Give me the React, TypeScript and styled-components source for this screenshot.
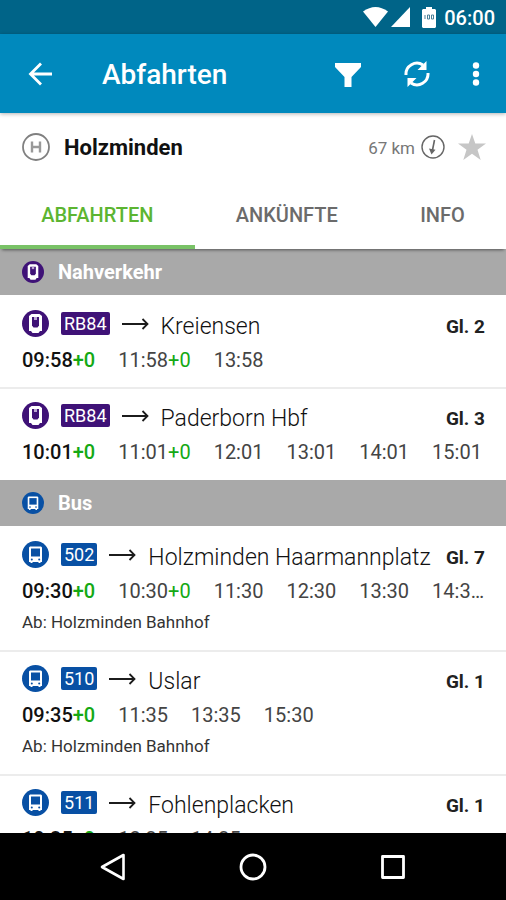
import React from 'react';
import styled, { createGlobalStyle } from 'styled-components';

const GlobalStyle = createGlobalStyle`
  * { box-sizing: border-box; }
  body {
    margin: 0;
    background: #fff;
    color: #212121;
    font-family: Roboto, 'Liberation Sans', sans-serif;
  }
  button {
    display: flex;
    align-items: center;
    justify-content: center;
    padding: 0;
    border: 0;
    background: none;
    color: inherit;
    font: inherit;
    cursor: pointer;
  }
  svg { display: block; flex: none; }
  h1, h2, p, ul { margin: 0; padding: 0; }
`;

const Screen = styled.div`
  display: flex;
  flex-direction: column;
  height: 100vh;
`;

const StatusBar = styled.div`
  display: flex;
  flex: none;
  align-items: center;
  justify-content: flex-end;
  height: 34px;
  padding: 0 11px;
  background: #006488;
  color: #fff;
`;

const Clock = styled.time`
  margin-left: 8px;
  font-size: 20px;
  font-weight: 500;
  line-height: 34px;
  padding-top: 2px;
`;

const BatterySlot = styled.span`
  margin-left: 11px;
`;

const AppBar = styled.header`
  position: relative;
  z-index: 1;
  display: flex;
  flex: none;
  align-items: center;
  height: 79px;
  padding: 0 10px 0 20px;
  background: #0089bd;
  color: #fff;
  box-shadow: 0 1px 4px rgba(0, 0, 0, 0.3);
`;

const Title = styled.h1`
  flex: 1;
  margin-left: 42px;
  padding-top: 2px;
  font-size: 28px;
  font-weight: 500;
  line-height: 36px;
`;

const BarButton = styled.button<{ $gap?: number }>`
  width: 40px;
  height: 48px;
  margin-left: ${(p) => p.$gap ?? 0}px;
`;

const StationRow = styled.section`
  display: flex;
  flex: none;
  align-items: center;
  height: 68px;
  padding: 0 20px 0 22px;
`;

const StationName = styled.h2`
  flex: 1;
  margin-left: 14px;
  padding-top: 2px;
  color: #111;
  font-size: 22px;
  font-weight: 700;
  line-height: 32px;
`;

const Distance = styled.span`
  margin-right: 6px;
  padding-top: 2px;
  color: #777;
  font-size: 17px;
  line-height: 32px;
`;

const StarButton = styled.button`
  margin-left: 13px;
`;

const Tabs = styled.div`
  position: relative;
  z-index: 1;
  display: flex;
  flex: none;
  height: 68px;
  box-shadow: 0 3px 3px -2px rgba(0, 0, 0, 0.5);
`;

const Tab = styled.button<{ $active?: boolean }>`
  && {
    flex: 1 1 auto;
    padding: 4px 41px 0;
    border-bottom: 4px solid ${(p) => (p.$active ? '#79c267' : 'transparent')};
    color: ${(p) => (p.$active ? '#5cb531' : '#6b6b6b')};
    font-size: 20px;
    font-weight: 500;
  }
`;

const List = styled.main`
  flex: 1;
  min-height: 0;
  overflow-y: auto;
  scrollbar-width: none;
`;

const SectionHead = styled.h2`
  display: flex;
  align-items: center;
  gap: 14px;
  height: 46px;
  padding: 0 22px;
  background: #a9a9a9;
  color: #fff;
  font-size: 20px;
  font-weight: 700;
`;

const Departures = styled.ul`
  && { padding-bottom: 1px; }
  list-style: none;
`;

const Departure = styled.li`
  padding: 11px 21px 12px 22px;
  border-top: 2px solid #ececec;
  &:first-child { border-top-color: #fff; }
`;

const Heading = styled.div`
  display: flex;
  align-items: center;
  height: 36px;
  margin-bottom: 1px;
`;

const Line = styled.div`
  display: flex;
  align-items: center;
  gap: 12px;
  padding-bottom: 5px;
`;

const Badge = styled.span<{ $color: string }>`
  padding: 0 3px;
  border-radius: 2px;
  background: ${(p) => p.$color};
  color: #fff;
  font-size: 18px;
  line-height: 23px;
`;

const Destination = styled.span`
  flex: 1;
  margin-left: 12px;
  padding-top: 2px;
  overflow: hidden;
  color: #111;
  font-size: 23px;
  font-weight: 300;
  line-height: 32px;
  white-space: nowrap;
`;

const Platform = styled.span`
  padding-top: 2px;
  font-size: 19px;
  font-weight: 700;
  line-height: 32px;
`;

const Times = styled.div`
  display: flex;
  gap: 23px;
  height: 30px;
  color: #333;
  font-size: 20px;
  line-height: 30px;
  white-space: nowrap;
`;

const Time = styled.span<{ $next?: boolean }>`
  color: ${(p) => (p.$next ? '#111' : '#444')};
  font-weight: ${(p) => (p.$next ? 500 : 400)};
`;

const Delay = styled.span`
  color: #14a914;
`;

const Origin = styled.p`
  color: #333;
  font-size: 17px;
  line-height: 32px;
`;

const NavBar = styled.nav`
  display: flex;
  flex: none;
  justify-content: center;
  height: 67px;
  background: #000;
  color: #fff;
`;

const NavButton = styled.button`
  width: 140px;
`;

const PURPLE = '#3f1277';
const BLUE = '#0850a4';

type Kind = 'train' | 'bus';

function VehicleIcon({ kind, size }: { kind: Kind; size: number }) {
  if (kind === 'train') {
    return (
      <svg width={size} height={size} viewBox="0 0 27 27" aria-hidden="true">
        <circle cx="13.5" cy="13.5" r="13.5" fill={PURPLE} />
        <path d="M9.500 4h8L20 6v15h-2l-1.500 2h-6L9 21H7V6z" fill="#fff" />
        <path d="M10 7h7v8.500L15.500 17.500h-4L10 15.500z" fill={PURPLE} />
        <path d="M12 7h3v3h-3z" fill="#b9a6d0" />
      </svg>
    );
  }
  return (
    <svg width={size} height={size} viewBox="0 0 27 27" aria-hidden="true">
      <circle cx="13.500" cy="13.500" r="13.500" fill={BLUE} />
      <path d="M8 5.500h11l1 1V21h-1.500v1h-2v-1h-6v1h-2v-1H7V6.500z" fill="#fff" />
      <path d="M9 7.500h9v8H9z" fill={BLUE} />
      <circle cx="9.800" cy="18.500" r="1" fill={BLUE} />
      <circle cx="17.200" cy="18.500" r="1" fill={BLUE} />
    </svg>
  );
}

function LongArrow() {
  return (
    <svg width="27" height="14" viewBox="0 0 27 14" fill="none" stroke="#1c1c1c" strokeWidth="1.800" aria-label="nach">
      <path d="M0 7h26M20.500 2l5 5-5 5" />
    </svg>
  );
}

interface Entry {
  line: string;
  to: string;
  platform: string;
  times: [string, boolean?][];
  from?: string;
}

const groups: { name: string; kind: Kind; entries: Entry[] }[] = [
  {
    name: 'Nahverkehr',
    kind: 'train',
    entries: [
      { line: 'RB84', to: 'Kreiensen', platform: 'Gl. 2', times: [['09:58', true], ['11:58', true], ['13:58']] },
      {
        line: 'RB84',
        to: 'Paderborn Hbf',
        platform: 'Gl. 3',
        times: [['10:01', true], ['11:01', true], ['12:01'], ['13:01'], ['14:01'], ['15:01']],
      },
    ],
  },
  {
    name: 'Bus',
    kind: 'bus',
    entries: [
      {
        line: '502',
        to: 'Holzminden Haarmannplatz',
        platform: 'Gl. 7',
        times: [['09:30', true], ['10:30', true], ['11:30'], ['12:30'], ['13:30'], ['14:3…']],
        from: 'Ab: Holzminden Bahnhof',
      },
      {
        line: '510',
        to: 'Uslar',
        platform: 'Gl. 1',
        times: [['09:35', true], ['11:35'], ['13:35'], ['15:30']],
        from: 'Ab: Holzminden Bahnhof',
      },
      {
        line: '511',
        to: 'Fohlenplacken',
        platform: 'Gl. 1',
        times: [['10:35', true], ['12:35'], ['14:35']],
        from: 'Ab: Holzminden Bahnhof',
      },
    ],
  },
];

export default function App() {
  return (
    <Screen>
      <GlobalStyle />
      <StatusBar>
        <svg width="48" height="20" viewBox="0 0 48 20" fill="#fff" aria-hidden="true">
          <path d="M0 4.500Q12.500-4.500 25 4.500L12.500 20z" />
          <path d="M47 0v20H28z" />
        </svg>
        <BatterySlot>
          <svg width="14" height="21" viewBox="0 0 14 21" aria-hidden="true">
            <path d="M4 0h6v2h3l1 1v17l-1 1H1l-1-1V3l1-1h3z" fill="#fff" />
            <path d="M3 8v4M5.500 8h2v4h-2zM9.500 8h2v4h-2z" fill="none" stroke="#4a8098" />
          </svg>
        </BatterySlot>
        <Clock>06:00</Clock>
      </StatusBar>

      <AppBar>
        <BarButton aria-label="Zurück">
          <svg width="24" height="24" viewBox="0 0 24 24" fill="none" stroke="#fff" strokeWidth="2.800" aria-hidden="true">
            <path d="M24 12H3M13 1.500L2.500 12 13 22.500" />
          </svg>
        </BarButton>
        <Title>Abfahrten</Title>
        <BarButton aria-label="Filter">
          <svg width="26" height="26" viewBox="0 0 26 26" fill="#fff" aria-hidden="true">
            <path d="M0 2h26v4l-9.500 10v10h-7V16L0 6z" />
          </svg>
        </BarButton>
        <BarButton $gap={29} aria-label="Aktualisieren">
          <svg width="26" height="28" viewBox="0 0 26 28" fill="none" stroke="#fff" strokeWidth="3" aria-hidden="true">
            <path d="M2 15A11 11 0 0 1 19 5" />
            <path d="M24 13A11 11 0 0 1 7 23" />
            <path d="M22.500 1v9h-9zM3.500 27v-9h9z" fill="#fff" stroke="none" />
          </svg>
        </BarButton>
        <BarButton $gap={19} aria-label="Mehr">
          <svg width="8" height="24" viewBox="0 0 8 24" fill="#fff" aria-hidden="true">
            <circle cx="4" cy="3.500" r="3.200" />
            <circle cx="4" cy="12" r="3.200" />
            <circle cx="4" cy="20.500" r="3.200" />
          </svg>
        </BarButton>
      </AppBar>

      <StationRow>
        <svg width="28" height="28" viewBox="0 0 28 28" fill="none" stroke="#808080" aria-hidden="true">
          <circle cx="14" cy="14" r="13" strokeWidth="1.800" />
          <path d="M10 8.500v11M18 8.500v11M10 14h8" strokeWidth="2.400" stroke="#999" />
        </svg>
        <StationName>Holzminden</StationName>
        <Distance>67 km</Distance>
        <svg width="24" height="24" viewBox="0 0 24 24" fill="none" stroke="#666" aria-hidden="true">
          <circle cx="12" cy="12" r="11" strokeWidth="1.400" />
          <path d="M13.500 5L11.500 15" strokeWidth="1.600" />
          <path d="M8 13.500l6.500 1.300L10.500 19.500z" fill="#666" stroke="none" />
        </svg>
        <StarButton aria-label="Favorit">
          <svg width="28" height="26" viewBox="0 0 28 26" fill="#c6c6c6" aria-hidden="true">
            <path d="M14 0l3.300 9.500H28l-8.500 6.200L22.700 26 14 19.800 5.300 26l3.200-10.300L0 9.500h10.700z" />
          </svg>
        </StarButton>
      </StationRow>

      <Tabs role="tablist">
        <Tab role="tab" aria-selected="true" $active>ABFAHRTEN</Tab>
        <Tab role="tab" aria-selected="false">ANKÜNFTE</Tab>
        <Tab role="tab" aria-selected="false">INFO</Tab>
      </Tabs>

      <List>
        {groups.map((group) => (
          <section key={group.name}>
            <SectionHead>
              <VehicleIcon kind={group.kind} size={22} />
              {group.name}
            </SectionHead>
            <Departures>
              {group.entries.map((entry) => (
                <Departure key={entry.to}>
                  <Heading>
                    <Line>
                      <VehicleIcon kind={group.kind} size={27} />
                      <Badge $color={group.kind === 'train' ? PURPLE : BLUE}>{entry.line}</Badge>
                      <LongArrow />
                    </Line>
                    <Destination>{entry.to}</Destination>
                    <Platform>{entry.platform}</Platform>
                  </Heading>
                  <Times>
                    {entry.times.map(([time, live], i) => (
                      <Time key={time} $next={i === 0}>
                        {time}
                        {live && <Delay>+0</Delay>}
                      </Time>
                    ))}
                  </Times>
                  {entry.from && <Origin>{entry.from}</Origin>}
                </Departure>
              ))}
            </Departures>
          </section>
        ))}
      </List>

      <NavBar>
        <NavButton aria-label="Zurück">
          <svg width="26" height="28" viewBox="0 0 26 28" fill="none" stroke="#fff" strokeWidth="2.600" strokeLinejoin="round" aria-hidden="true">
            <path d="M23.500 2v24L2 14z" />
          </svg>
        </NavButton>
        <NavButton aria-label="Startbildschirm">
          <svg width="28" height="28" viewBox="0 0 28 28" fill="none" stroke="#fff" strokeWidth="2.800" aria-hidden="true">
            <circle cx="14" cy="14" r="12" />
          </svg>
        </NavButton>
        <NavButton aria-label="Übersicht">
          <svg width="26" height="26" viewBox="0 0 26 26" fill="none" stroke="#fff" strokeWidth="2.800" strokeLinejoin="round" aria-hidden="true">
            <path d="M2.500 2.500h21v21h-21z" />
          </svg>
        </NavButton>
      </NavBar>
    </Screen>
  );
}
